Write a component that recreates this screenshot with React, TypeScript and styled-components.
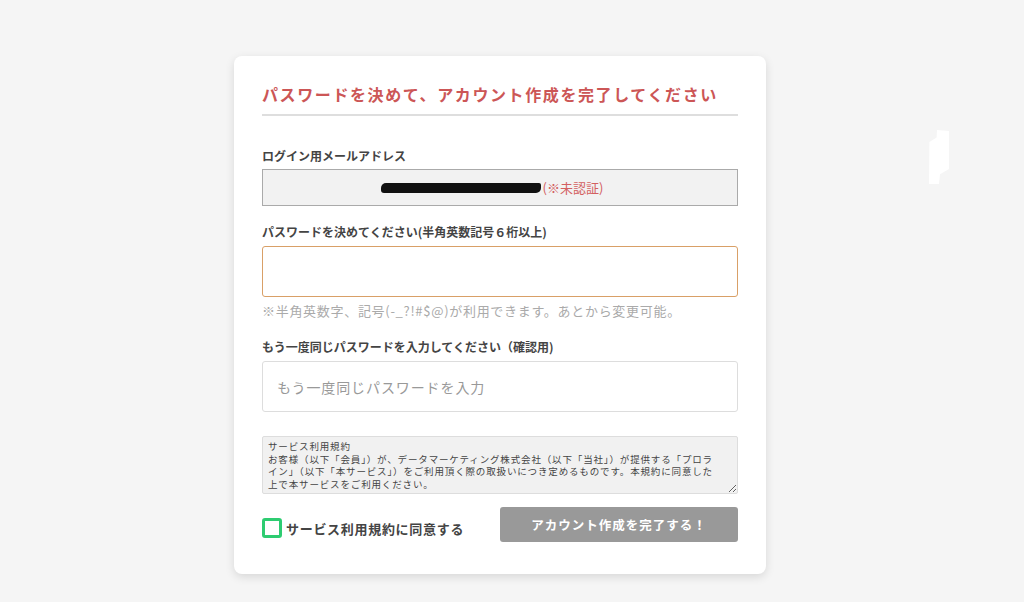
import { createGlobalStyle, styled } from "styled-components";

const GlobalStyle = createGlobalStyle`
  html, body {
    margin: 0;
    padding: 0;
    background: #f5f5f5;
    font-family: "Noto Sans CJK JP", "Noto Sans", sans-serif;
  }
  * { box-sizing: border-box; }
`;

const Page = styled.div`
  position: relative;
  width: 1024px;
  height: 602px;
  display: flex;
  padding: 56px 0 0 234px;
`;

const Glare = styled.div`
  position: absolute;
  left: 929px;
  top: 130px;
  width: 20px;
  height: 54px;
  background: #fff;
  clip-path: polygon(40% 0, 100% 2%, 100% 72%, 55% 82%, 50% 100%, 0 100%, 2% 22%, 38% 14%);
`;

const Card = styled.div`
  width: 532px;
  height: 518px;
  background: #fff;
  border-radius: 8px;
  box-shadow: 0 3px 10px rgba(0, 0, 0, 0.12);
  padding: 26px 28px 0;
  display: flex;
  flex-direction: column;
`;

const Title = styled.h1`
  margin: 0;
  padding-bottom: 8px;
  border-bottom: 2px solid #dedede;
  color: #cc5656;
  font-size: 16px;
  font-weight: 700;
  line-height: 24px;
  letter-spacing: 1.6px;
`;

const Label = styled.div<{ $top: number }>`
  margin-top: ${(p) => p.$top}px;
  color: #444;
  font-size: 12px;
  font-weight: 700;
  line-height: 18px;
`;

const EmailBox = styled.div`
  margin-top: 4px;
  height: 37px;
  background: #f2f2f2;
  border: 1px solid #aaa;
  display: flex;
  align-items: center;
  justify-content: center;
  padding-right: 16px;
  font-size: 13px;
`;

const Redacted = styled.span`
  display: inline-block;
  width: 160px;
  height: 10px;
  margin-top: 1px;
  background: #111;
  border-radius: 5px 2px 5px 3px;
  filter: blur(0.7px);
`;

const Unverified = styled.span`
  color: #d36060;
  margin-left: 2px;
`;

const Input = styled.input<{ $accent?: boolean }>`
  display: block;
  width: 100%;
  height: 51px;
  margin-top: 5px;
  border: 1px solid ${(p) => (p.$accent ? "#d9a067" : "#ddd")};
  border-radius: 3px;
  padding: 0 14px;
  font-family: inherit;
  font-size: 14px;
  letter-spacing: 0.9px;
  color: #333;
  outline: none;
  &::placeholder { color: #999; }
`;

const Hint = styled.div`
  margin-top: 5px;
  color: #aaa;
  font-size: 13px;
  line-height: 18px;
  letter-spacing: 0.7px;
`;

const Terms = styled.textarea`
  display: block;
  width: 100%;
  height: 58px;
  margin-top: 24px;
  background: #f1f1f1;
  border: 1px solid #ddd;
  border-radius: 2px;
  padding: 3px 20px 3px 5px;
  font-family: inherit;
  font-size: 9.5px;
  line-height: 12.5px;
  letter-spacing: 0.85px;
  color: #444;
  resize: vertical;
  overflow: hidden;
`;

const Footer = styled.div`
  margin-top: 13px;
  display: flex;
  align-items: center;
  justify-content: space-between;
`;

const Agree = styled.label`
  display: flex;
  align-items: center;
  gap: 4px;
  margin-top: 7px;
  color: #444;
  font-size: 13px;
  font-weight: 700;
  letter-spacing: 0.7px;
`;

const Check = styled.span`
  width: 20px;
  height: 20px;
  border: 3px solid #2ecc71;
  border-radius: 3px;
`;

const Submit = styled.button`
  width: 238px;
  height: 35px;
  border: none;
  border-radius: 3px;
  background: #999;
  color: #fff;
  font-family: inherit;
  font-size: 12.5px;
  font-weight: 700;
  letter-spacing: 1px;
`;

const termsText =
  "サービス利用規約\nお客様（以下「会員」）が、データマーケティング株式会社（以下「当社」）が提供する「プロライン」（以下「本サービス」）をご利用頂く際の取扱いにつき定めるものです。本規約に同意した上で本サービスをご利用ください。";

const App: React.FC = () => {
  return (
    <Page>
      <GlobalStyle />
      <Card>
        <Title>パスワードを決めて、アカウント作成を完了してください</Title>
        <Label $top={31}>ログイン用メールアドレス</Label>
        <EmailBox>
          <Redacted />
          <Unverified>(※未認証)</Unverified>
        </EmailBox>
        <Label $top={17}>パスワードを決めてください(半角英数記号６桁以上)</Label>
        <Input type="password" $accent />
        <Hint>※半角英数字、記号(-_?!#$@)が利用できます。あとから変更可能。</Hint>
        <Label $top={18}>もう一度同じパスワードを入力してください（確認用)</Label>
        <Input type="password" placeholder="もう一度同じパスワードを入力" />
        <Terms readOnly defaultValue={termsText} />
        <Footer>
          <Agree>
            <Check />
            サービス利用規約に同意する
          </Agree>
          <Submit>アカウント作成を完了する！</Submit>
        </Footer>
      </Card>
      <Glare />
    </Page>
  );
};

export default App;
